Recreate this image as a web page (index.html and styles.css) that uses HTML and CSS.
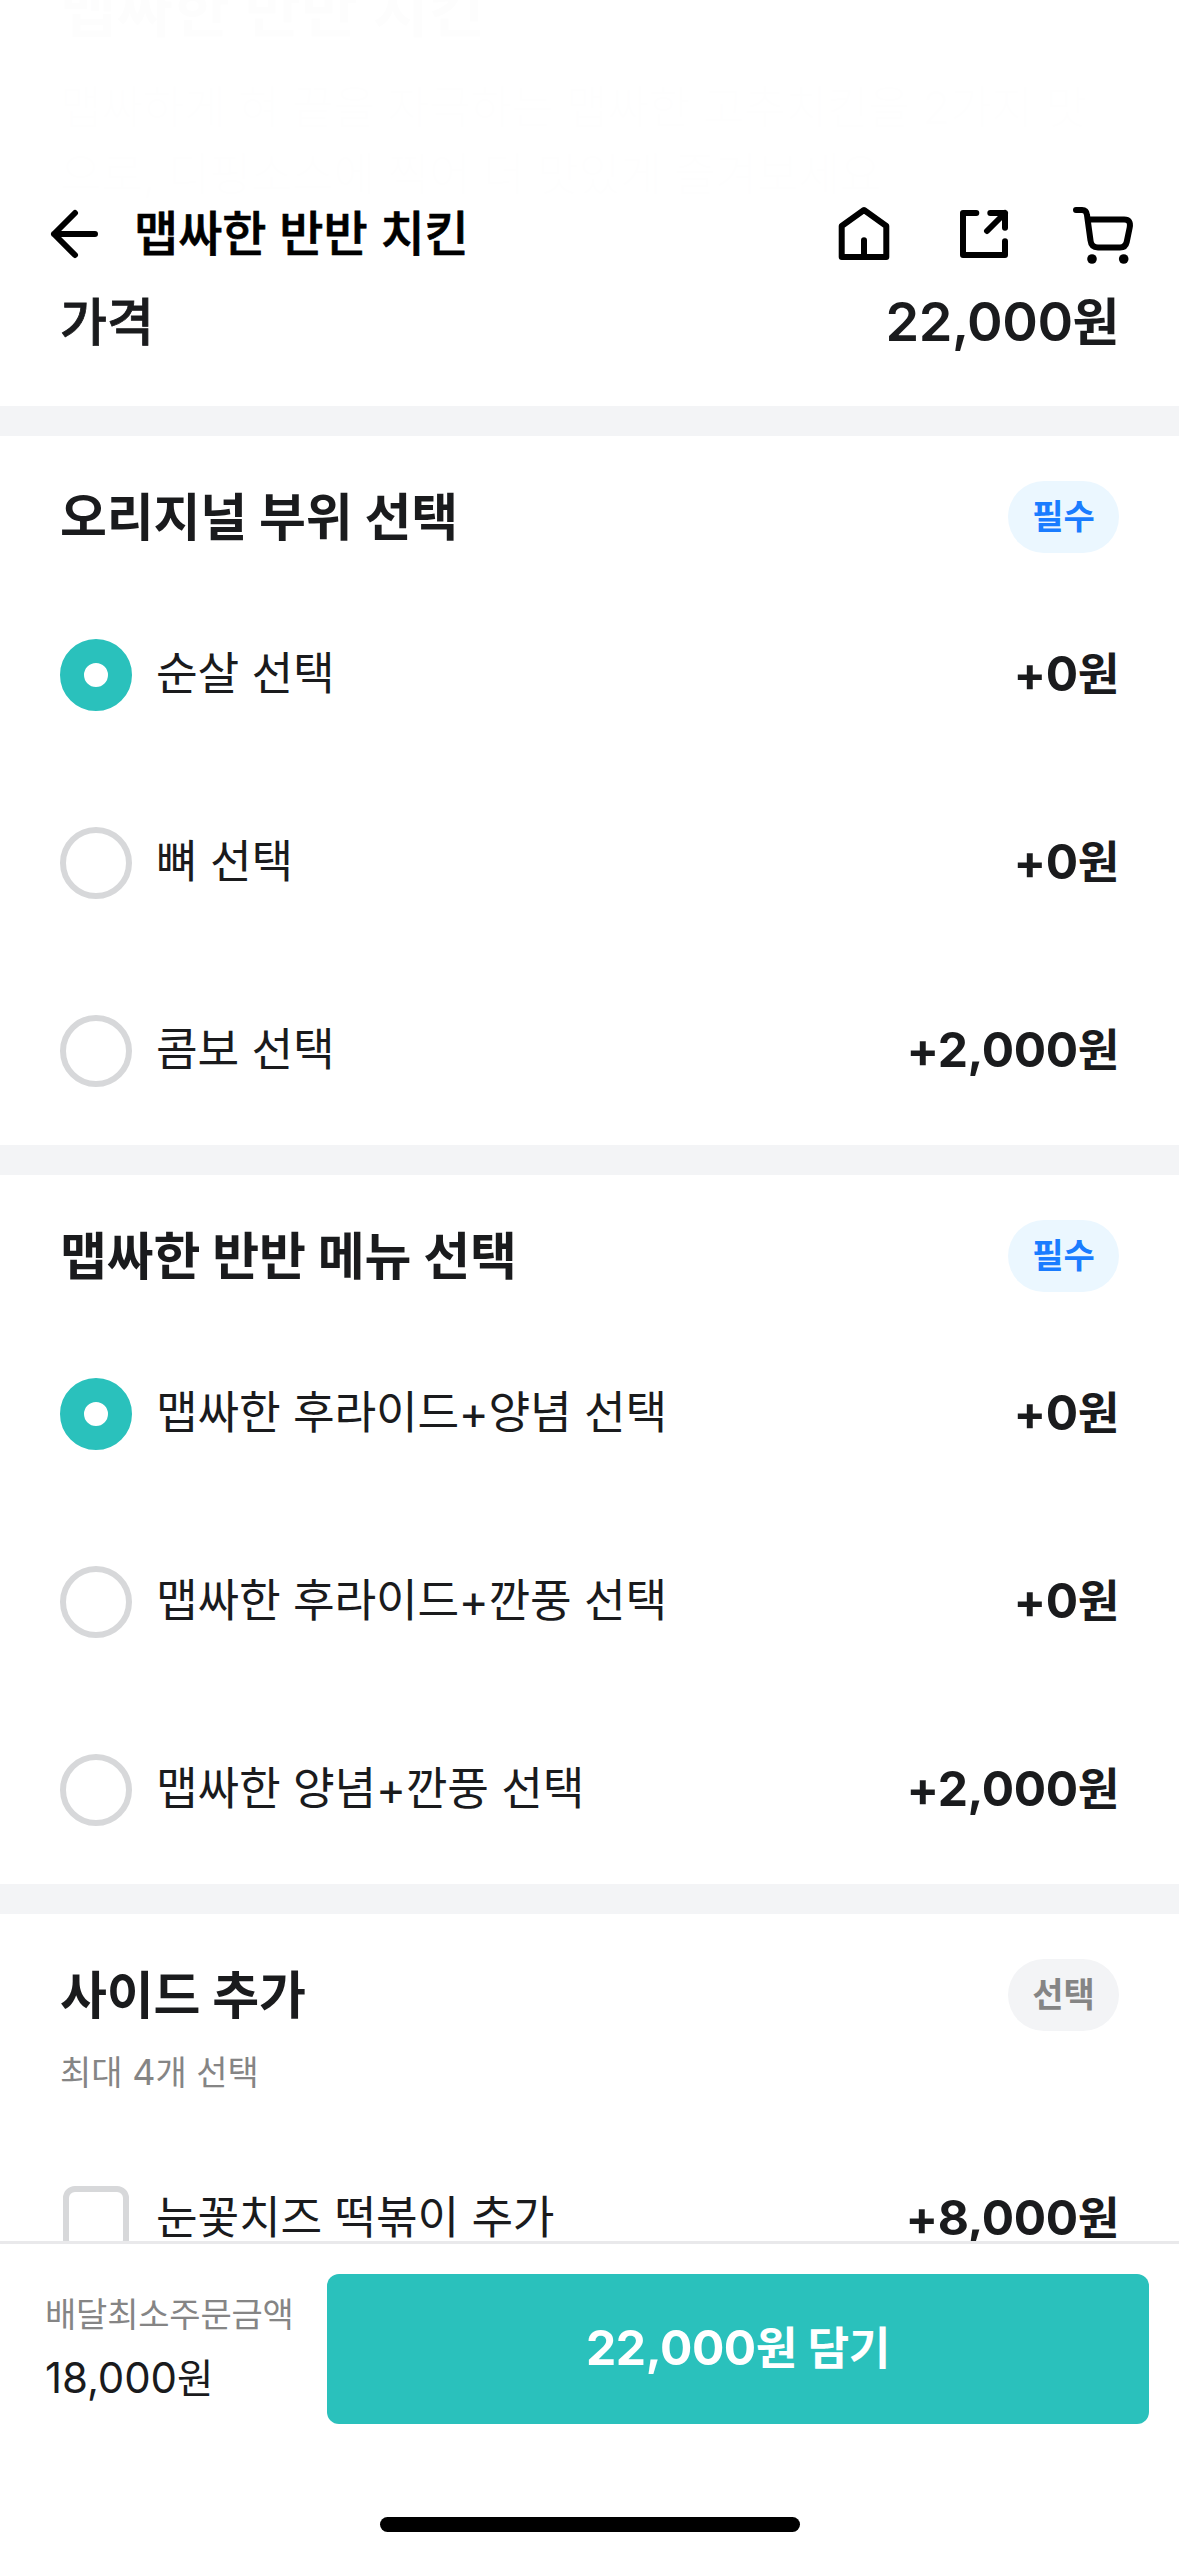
FILE: index.html
```html
<!DOCTYPE html>
<html lang="ko">
<head>
<meta charset="utf-8">
<title>맵싸한 반반 치킨</title>
<link rel="stylesheet" href="styles.css">
</head>
<body>
<div class="screen">
  <header class="topbar">
    <svg class="icon" width="60" height="60" viewBox="46 204 60 60"><path d="M76 213 55 234 76 255M55 234H96"/></svg>
    <h1 class="topbar-title">맵싸한 반반 치킨</h1>
    <nav class="topbar-actions">
      <svg class="icon" width="60" height="60" viewBox="834 204 60 60"><path d="M864 210 841.7 226V257H886.3V226ZM864 240.3V257"/></svg>
      <svg class="icon" width="60" height="60" viewBox="954 204 60 60"><path d="M976.3 213H963V255H1005V241.3M990.3 213H1005V227.7M1005 213 987 231"/></svg>
      <svg class="icon" width="64" height="60" viewBox="1074 204 64 60"><path d="M1076 210h6q4.500 0 5 5l3.500 25.500q.8 7 7.500 7h22q5.500 0 6.700-5.500l3-14.500q1.500-8-5.500-8H1088"/><circle class="wheel" cx="1092" cy="259" r="4.800"/><circle class="wheel" cx="1123.700" cy="259" r="4.800"/></svg>
    </nav>
  </header>

  <main class="content">
    <section class="intro">
      <h2 class="intro-title">맵싸한 반반 치킨</h2>
      <p class="intro-text">맵싸하게 혀 끝을 자극하는 맵싸한 고추치킨을 2가지 맛<br>으로, 디핑소스에 찍어 더 맛있게 즐겨보세요</p>
      <div class="total"><span>가격</span><span class="total-price"><span class="num">22,000</span>원</span></div>
    </section>

    <section class="group">
      <div class="group-head"><h2 class="group-title">오리지널 부위 선택</h2><span class="badge required">필수</span></div>
      <div class="option"><span class="radio checked"></span><span class="label">순살 선택</span><span class="price"><span class="num">+0</span>원</span></div>
      <div class="option"><span class="radio"></span><span class="label">뼈 선택</span><span class="price"><span class="num">+0</span>원</span></div>
      <div class="option"><span class="radio"></span><span class="label">콤보 선택</span><span class="price"><span class="num">+2,000</span>원</span></div>
    </section>

    <section class="group">
      <div class="group-head"><h2 class="group-title">맵싸한 반반 메뉴 선택</h2><span class="badge required">필수</span></div>
      <div class="option"><span class="radio checked"></span><span class="label">맵싸한 후라이드+양념 선택</span><span class="price"><span class="num">+0</span>원</span></div>
      <div class="option"><span class="radio"></span><span class="label">맵싸한 후라이드+깐풍 선택</span><span class="price"><span class="num">+0</span>원</span></div>
      <div class="option"><span class="radio"></span><span class="label">맵싸한 양념+깐풍 선택</span><span class="price"><span class="num">+2,000</span>원</span></div>
    </section>

    <section class="group">
      <div class="group-head"><h2 class="group-title">사이드 추가</h2><span class="badge">선택</span></div>
      <p class="hint">최대 <span class="num">4</span>개 선택</p>
      <div class="option"><span class="checkbox"></span><span class="label">눈꽃치즈 떡볶이 추가</span><span class="price"><span class="num">+8,000</span>원</span></div>
    </section>
  </main>

  <footer class="orderbar">
    <div class="order">
      <div class="minimum"><span class="minimum-label">배달최소주문금액</span><span class="minimum-value"><span class="num">18,000</span>원</span></div>
      <button class="add"><span><span class="num">22,000</span>원 담기</span></button>
    </div>
    <div class="home-indicator"></div>
  </footer>
</div>
</body>
</html>
```
FILE: styles.css
```css
* { box-sizing: border-box; margin: 0; padding: 0; }

body {
  background: #fff;
  color: #1a1b1d;
  font-family: Inter, "Noto Sans CJK KR", sans-serif;
}

.screen { position: relative; width: 1179px; height: 2556px; overflow: hidden; background: #fff; }

/* Latin digits sit slightly larger than the Hangul beside them */
.num { font-size: 1.06em; line-height: 1; }

.topbar {
  position: absolute; top: 0; left: 0; z-index: 1;
  display: flex; align-items: center;
  width: 100%; height: 288px;
  padding: 204px 41px 24px 45px;
  background: rgba(255, 255, 255, .991);
}
.topbar-title { margin-left: 29px; font-size: 48px; font-weight: 500; line-height: 60px; color: #000; -webkit-text-stroke: .7px #000; }
.topbar-actions { display: flex; gap: 60px; margin-left: auto; }
.icon { display: block; overflow: visible; fill: none; stroke: #000; stroke-width: 6; stroke-linecap: round; stroke-linejoin: round; }
.wheel { fill: #000; stroke: none; }

.content { display: flow-root; }
.intro { margin-top: -30px; padding: 0 60px 51px; }
.intro-title { font-size: 61.500px; font-weight: 700; line-height: 80px; }
.intro-text { margin-top: 24px; font-size: 45px; font-weight: 300; line-height: 67px; color: #77787a; white-space: nowrap; }
.total { display: flex; justify-content: space-between; margin-top: 83px; font-size: 51px; font-weight: 500; line-height: 64px; -webkit-text-stroke: .8px #1a1b1d; }
.total-price { font-weight: 600; letter-spacing: -.5px; -webkit-text-stroke: 0; }

.group { border-top: 30px solid #f3f4f6; padding: 45px 60px 0; }
.group-head { display: flex; align-items: center; justify-content: space-between; height: 72px; margin-bottom: 28px; }
.group-title { padding-top: 2px; font-size: 51px; font-weight: 700; line-height: 72px; letter-spacing: -.15px; }
.badge {
  width: 111px; height: 72px; border-radius: 36px;
  background: #f3f4f6; color: #858585;
  font-size: 34px; font-weight: 600; line-height: 72px; text-align: center;
}
.badge.required { background: #ebf7ff; color: #1a7cff; }
.hint { margin: -13px 0 25px; font-size: 34px; line-height: 54px; color: #858585; }

.option { display: flex; align-items: center; height: 188px; font-size: 45.300px; line-height: 60px; }
.radio { width: 72px; height: 72px; border: 6px solid #d7d8da; border-radius: 50%; }
.radio.checked { border: 24px solid #2ac1bc; }
.checkbox { width: 66px; height: 66px; margin: 0 3px; border: 6px solid #d7d8da; border-radius: 12px; }
.label { margin-left: 24px; padding-bottom: 3px; letter-spacing: -.2px; }
.price { margin-left: auto; padding-bottom: 1px; font-weight: 700; letter-spacing: -.4px; }

.orderbar {
  position: absolute; left: 0; bottom: 0; z-index: 1;
  width: 100%; height: 315px;
  padding: 30px 30px 0 45px;
  border-top: 3px solid #e9e9eb;
  background: #fff;
}
.order { display: flex; align-items: center; justify-content: space-between; }
.minimum { display: flex; flex-direction: column; padding-bottom: 4px; line-height: 64px; }
.minimum-label { font-size: 34px; letter-spacing: -.2px; color: #858585; }
.minimum-value { font-size: 39.600px; letter-spacing: -.1px; }
.add {
  width: 822px; height: 150px; padding-bottom: 1px;
  border: 0; border-radius: 12px;
  background: #2ac1bc; color: #fff;
  font: 700 45.300px/60px Inter, "Noto Sans CJK KR", sans-serif;
  letter-spacing: -.4px;
}
.home-indicator { width: 420px; height: 15px; margin: 93px 0 0 335px; border-radius: 8px; background: #000; }
```
